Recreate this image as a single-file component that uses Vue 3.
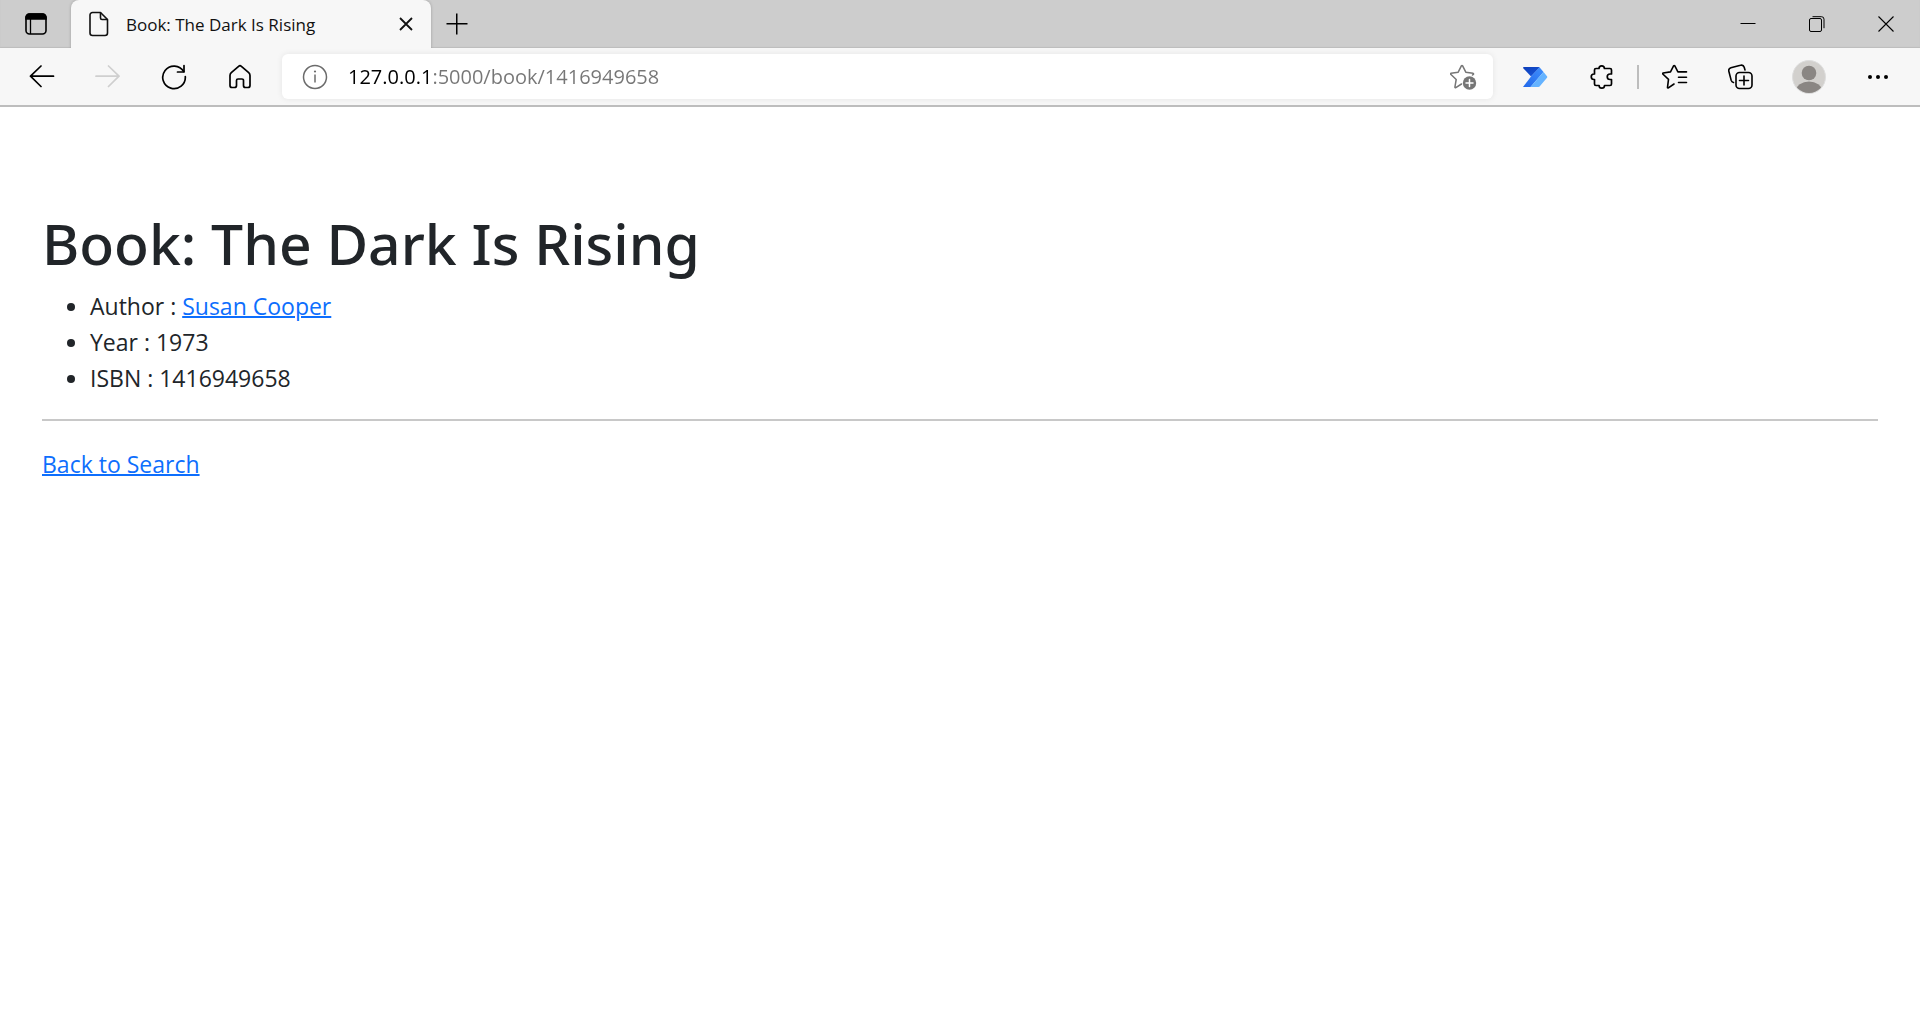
<script setup>
import { ref } from 'vue'

const address = ref('127.0.0.1:5000/book/1416949658')
const book = {
  title: 'The Dark Is Rising',
  author: 'Susan Cooper',
  year: 1973,
  isbn: '1416949658',
}
</script>

<template>
  <div class="browser">
    <header class="titlebar">
      <button class="tab-actions" aria-label="Tab actions menu">
        <svg width="22" height="22" viewBox="0 0 22 22" fill="none" stroke="#000" stroke-width="1.6">
          <rect x="1" y="1" width="20" height="20" rx="3.5" />
          <path d="M1 6V4.5A3.5 3.5 0 0 1 4.500 1h13A3.500 3.500 0 0 1 21 4.500V6z" fill="#000" />
          <path d="M5.500 6v15" stroke-width="1.300" />
        </svg>
      </button>
      <div class="tab">
        <svg width="20" height="26" viewBox="0 0 20 26" fill="none" stroke="#111" stroke-width="1.600" stroke-linejoin="round">
          <path d="M3.500 1.500h8l7 7V22a2.500 2.500 0 0 1-2.500 2.500H3.500A2.500 2.500 0 0 1 1 22V4a2.500 2.500 0 0 1 2.500-2.500z" />
          <path d="M11.500 1.500V7A1.500 1.500 0 0 0 13 8.500h5.500" />
        </svg>
        <span class="tab-title">Book: {{ book.title }}</span>
        <button class="tab-close" aria-label="Close tab">
          <svg width="14" height="14" viewBox="0 0 14 14" stroke="#111" stroke-width="1.800"><path d="M1 1l12 12M13 1L1 13" /></svg>
        </button>
      </div>
      <button class="new-tab" aria-label="New tab">
        <svg width="22" height="22" viewBox="0 0 22 22" stroke="#000" stroke-width="1.500"><path d="M0.500 10.750h21M10.750 0.500v21" /></svg>
      </button>
      <div class="window-controls">
        <button aria-label="Minimize">
          <svg width="16" height="16" viewBox="0 0 16 16" stroke="#000"><path d="M0.500 7.500h15" /></svg>
        </button>
        <button aria-label="Restore">
          <svg width="16" height="16" viewBox="0 0 16 16" fill="none" stroke="#000">
            <rect x="0.500" y="2.500" width="12" height="13" rx="1.500" />
            <path d="M3.500 0.700h9a2.500 2.500 0 0 1 2.500 2.500v9" />
          </svg>
        </button>
        <button aria-label="Close">
          <svg width="16" height="16" viewBox="0 0 16 16" stroke="#000" stroke-width="1.100"><path d="M0.500 0.500l15 15M15.500 0.500l-15 15" /></svg>
        </button>
      </div>
    </header>

    <nav class="toolbar" aria-label="Browser toolbar">
      <div class="nav-buttons">
        <button aria-label="Back">
          <svg width="26" height="24" viewBox="0 0 26 24" fill="none" stroke="#000" stroke-width="1.700" stroke-linecap="round" stroke-linejoin="round"><path d="M12 1L1.500 11.200 12 21.500M1.500 11.200h23" /></svg>
        </button>
        <button aria-label="Forward" disabled>
          <svg width="26" height="24" viewBox="0 0 26 24" fill="none" stroke="#cfcfcf" stroke-width="1.700" stroke-linecap="round" stroke-linejoin="round"><path d="M13.500 1L24 11.200 13.500 21.500M24 11.200H1" /></svg>
        </button>
        <button aria-label="Refresh">
          <svg width="26" height="26" viewBox="0 0 26 26" fill="none" stroke="#000" stroke-width="1.700" stroke-linecap="round" stroke-linejoin="round">
            <path d="M22.700 7.500A11.300 11.300 0 1 0 24.300 12.500" />
            <path d="M23 1.500V8h-6.500" />
          </svg>
        </button>
        <button aria-label="Home">
          <svg width="24" height="26" viewBox="0 0 24 26" fill="none" stroke="#000" stroke-width="1.700" stroke-linejoin="round">
            <path d="M3.300 8.700l7.300-6.400a2 2 0 0 1 2.800 0l7.300 6.400A4 4 0 0 1 22 11.600V21.500a2 2 0 0 1-2 2h-2.500a2 2 0 0 1-2-2v-5a1.500 1.500 0 0 0-1.500-1.500h-4A1.500 1.500 0 0 0 8.500 16.500v5a2 2 0 0 1-2 2H4a2 2 0 0 1-2-2v-9.900a4 4 0 0 1 1.300-2.900z" />
          </svg>
        </button>
      </div>

      <div class="address-bar">
        <button aria-label="View site information">
          <svg width="26" height="26" viewBox="0 0 26 26" fill="none" stroke="#6b6b6b" stroke-width="1.500">
            <circle cx="13" cy="13" r="11.500" />
            <path d="M13 10.500v8" />
            <circle cx="13" cy="7.500" r="1.100" fill="#6b6b6b" stroke="none" />
          </svg>
        </button>
        <input v-model="address" type="text" aria-label="Address" spellcheck="false" />
        <button aria-label="Add this page to favorites">
          <svg width="28" height="28" viewBox="0 0 28 28" fill="none" stroke="#767676" stroke-width="1.500" stroke-linejoin="round" stroke-linecap="round">
            <path d="M11.500 21l-5.700 3.700a.6.6 0 0 1-.9-.6l1.300-7.600L.7 11.300a.6.6 0 0 1 .3-1L8.200 9.200l3.300-6.500a.6.6 0 0 1 1 0l3.300 6.500 7.200 1.100a.6.6 0 0 1 .4 1L22.500 12" />
            <circle cx="19.500" cy="20" r="6.700" fill="#767676" stroke="none" />
            <path d="M19.500 16.500v7M16 20h7" stroke="#fff" />
          </svg>
        </button>
      </div>

      <div class="tools">
        <button aria-label="Power Automate">
          <svg width="26" height="22" viewBox="0 0 26 22">
            <defs>
              <linearGradient id="flow-dark" x1="0" y1="0" x2="1" y2="1"><stop stop-color="#0f3fb8" /><stop offset="1" stop-color="#1757dc" /></linearGradient>
              <linearGradient id="flow-mid" x1="0" y1="1" x2="1" y2="0"><stop stop-color="#2268ea" /><stop offset="1" stop-color="#3f8ffc" /></linearGradient>
            </defs>
            <path d="M1.500 1h15a1.500 1.500 0 0 1 1.100.5L9 10.500 1 2z" fill="url(#flow-dark)" />
            <path d="M17.500 1.300L21.500 6 8.500 21H1l8-10.500z" fill="url(#flow-mid)" />
            <path d="M21.500 6L25 10.200a1.200 1.200 0 0 1 0 1.600l-7.400 8.700a1.500 1.500 0 0 1-1.100.5H8.500z" fill="#65b3ff" />
          </svg>
        </button>
        <button aria-label="Extensions">
          <svg width="24" height="26" viewBox="0 0 24 26" fill="none" stroke="#000" stroke-width="1.700" stroke-linejoin="round">
            <path d="M10 4.500a2.700 2.700 0 0 1 5.400 0H21a1.500 1.500 0 0 1 1.500 1.500V10H21a2.700 2.700 0 0 0 0 5.500h1.500V20a1.500 1.500 0 0 1-1.500 1.500h-5.500a2.700 2.700 0 0 1-5.400 0H7A1.500 1.500 0 0 1 5.500 20v-4.500H5A2.700 2.700 0 0 1 5 10h.5V6A1.500 1.500 0 0 1 7 4.500z" />
          </svg>
        </button>
        <span class="divider"></span>
        <button aria-label="Favorites">
          <svg width="26" height="26" viewBox="0 0 26 26" fill="none" stroke="#000" stroke-width="1.600" stroke-linejoin="round" stroke-linecap="round">
            <path d="M12 20l-5.600 3.900a.6.6 0 0 1-.9-.6l1-8L.8 10a.6.6 0 0 1 .3-1L8.500 7.900l3.200-6.200a.6.6 0 0 1 1 0l3.200 6.200H24.500M16.500 13.300h8M16.500 18.500h8" />
          </svg>
        </button>
        <button aria-label="Collections">
          <svg width="26" height="26" viewBox="0 0 26 26" fill="none" stroke="#000" stroke-width="1.600" stroke-linecap="round">
            <path d="M5.500 18.500a3 3 0 0 1-2.300-2.100L.9 7.500a3 3 0 0 1 2-3.700L12.500 1.300a3 3 0 0 1 3.700 2l.8 2.700" />
            <rect x="8" y="8.500" width="16" height="16" rx="3.500" />
            <path d="M16 12v9M11.500 16.500h9" />
          </svg>
        </button>
        <button class="wide" aria-label="Profile">
          <svg width="34" height="34" viewBox="0 0 34 34">
            <defs><clipPath id="avatar-clip"><circle cx="17" cy="17" r="16" /></clipPath></defs>
            <circle cx="17" cy="17" r="16.500" fill="#d2d0cd" stroke="#dedede" />
            <g clip-path="url(#avatar-clip)" fill="#8a8683">
              <circle cx="17" cy="13" r="7.300" />
              <ellipse cx="17" cy="31" rx="13" ry="9.500" />
            </g>
          </svg>
        </button>
        <button class="wide" aria-label="Settings and more">
          <svg width="22" height="6" viewBox="0 0 22 6"><circle cx="3" cy="3" r="2" /><circle cx="11" cy="3" r="2" /><circle cx="19" cy="3" r="2" /></svg>
        </button>
      </div>
    </nav>

    <main class="page">
      <h1>Book: {{ book.title }}</h1>
      <ul>
        <li>Author : <a href="#author">{{ book.author }}</a></li>
        <li>Year : {{ book.year }}</li>
        <li>ISBN : {{ book.isbn }}</li>
      </ul>
      <hr />
      <a href="#search">Back to Search</a>
    </main>
  </div>
</template>

<style>
body {
  margin: 0;
  background: #fff;
}
</style>

<style scoped>
.browser {
  font-family: "Segoe UI", "Open Sans", "Noto Sans", sans-serif;
  color: #212529;
}

button {
  display: flex;
  align-items: center;
  justify-content: center;
  padding: 0;
  border: 0;
  background: none;
}

svg {
  display: block;
  flex: none;
}

.titlebar {
  display: flex;
  height: 48px;
  background: #cdcdcd;
  box-shadow: inset 0 -1px 1px #bdbdbd;
}

.tab-actions {
  width: 71px;
}

.tab {
  display: flex;
  align-items: center;
  box-sizing: border-box;
  width: 360px;
  padding: 0 17px 0 18px;
  border-radius: 8px 8px 0 0;
  background: #f7f7f7;
  box-shadow: 0 0 3px rgba(0, 0, 0, 0.25);
}

.tab-title {
  flex: 1;
  margin-left: 17px;
  font-size: 17px;
  color: #111;
}

.tab-close {
  width: 16px;
  height: 24px;
}

.new-tab {
  width: 52px;
}

.window-controls {
  display: flex;
  margin-left: auto;
}

.window-controls button {
  width: 69px;
}

.toolbar {
  position: relative;
  display: flex;
  align-items: center;
  height: 57px;
  border-bottom: 2px solid #bdbdbd;
  background: #f7f7f7;
}

.nav-buttons {
  display: flex;
  padding: 0 9px;
}

.nav-buttons button {
  width: 66px;
  height: 45px;
}

.address-bar {
  display: flex;
  flex: 1;
  align-items: center;
  height: 45px;
  padding: 0 15px 0 20px;
  border-radius: 6px;
  background: #fff;
  box-shadow: 0 0 6px rgba(0, 0, 0, 0.08);
}

.address-bar input {
  flex: 1;
  height: 40px;
  margin-left: 20px;
  padding: 0;
  border: 0;
  outline: 0;
  background: linear-gradient(to right, #000 82px, #767676 82px);
  background-clip: text;
  color: transparent;
  font-family: inherit;
  font-size: 20px;
}

.tools {
  display: flex;
  align-items: center;
  padding: 0 8px 0 9px;
}

.tools button {
  width: 66px;
  height: 45px;
}

.tools .wide {
  width: 69px;
}

.divider {
  width: 2px;
  height: 24px;
  margin: 0 3px;
  background: #bdbdbd;
}

.page {
  padding: 100px 42px 24px;
  font-size: 23px;
  line-height: 36px;
}

h1 {
  margin: 0 0 9px;
  font-family: "Segoe UI", "Noto Sans", "Open Sans", sans-serif;
  font-size: 57px;
  font-weight: 500;
  line-height: 72px;
}

ul {
  margin: 0 0 23px;
  padding-left: 48px;
}

hr {
  height: 2px;
  margin: 0 0 25px;
  border: 0;
  background: #c8c8c8;
}

a {
  color: #0d6efd;
  text-decoration-thickness: 2px;
}
</style>
